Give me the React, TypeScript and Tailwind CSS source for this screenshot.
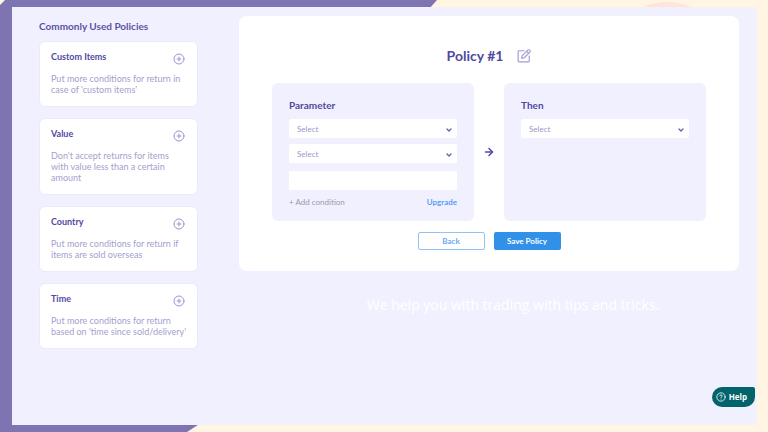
import { useState } from "react";
import { ArrowRight, ChevronDown, CircleHelp, CirclePlus } from "lucide-react";

interface Template {
	title: string;
	description: string;
}

const TEMPLATES: Template[] = [
	{
		title: "Custom Items",
		description: "Put more conditions for return in case of 'custom items'",
	},
	{
		title: "Value",
		description: "Don't accept returns for items with value less than a certain amount",
	},
	{
		title: "Country",
		description: "Put more conditions for return if items are sold overseas",
	},
	{
		title: "Time",
		description: "Put more conditions for return based on 'time since sold/delivery'",
	},
];

function Backdrop() {
	return (
		<svg
			className="absolute inset-0 h-full w-full"
			viewBox="0 0 768 432"
			preserveAspectRatio="none"
			aria-hidden="true"
		>
			<circle cx="667" cy="62" r="60" fill="#ffe4db" />
			<path d="M5 0H437L429 9L201 423L187 432H0V5Z" fill="#7e74b1" />
		</svg>
	);
}

function TemplateCard({ title, description }: Template) {
	return (
		<article className="rounded-md border border-[#ebe9fb] bg-white pt-2 pr-[10px] pb-[11px] pl-[11px]">
			<div className="flex items-start justify-between pr-[2px]">
				<h3 className="text-[9px] leading-[14px] font-bold text-[#5149a0]">{title}</h3>
				<button type="button" aria-label={`Add ${title}`} className="mt-[3px] text-[#9d94cd]">
					<CirclePlus className="size-3" strokeWidth={2} />
				</button>
			</div>
			<p className="mt-2 text-[9px] leading-[11px] text-[#a49fcd]">{description}</p>
		</article>
	);
}

function SelectField({ label }: { label: string }) {
	return (
		<div className="relative">
			<select
				aria-label={label}
				className="block h-[19px] w-full appearance-none rounded-xs bg-white px-2 text-[8px] leading-3 text-[#9d98ca]"
			>
				<option>Select</option>
			</select>
			<ChevronDown
				className="pointer-events-none absolute top-[7px] right-1 size-2 text-[#6a62ae]"
				strokeWidth={4}
			/>
		</div>
	);
}

function EditIcon() {
	return (
		<svg
			className="size-[14px]"
			viewBox="0 0 24 24"
			fill="none"
			stroke="currentColor"
			strokeWidth="2"
			strokeLinecap="round"
			strokeLinejoin="round"
		>
			<path d="M12 3H3.5A1.5 1.5 0 0 0 2 4.500V20.500A1.500 1.500 0 0 0 3.500 22H19.500A1.500 1.500 0 0 0 21 20.500V12" />
			<path d="M8 16L9 11.500L18.500 2A2.100 2.100 0 0 1 22 5.500L12.500 15Z" />
			<path d="M16.500 4L20 7.500" />
		</svg>
	);
}

function App() {
	const [value, setValue] = useState("");

	return (
		<div className="relative flex min-h-screen bg-[#fff5e2] pt-[7px] pr-[11px] pb-[7px] pl-3 font-[Lato,sans-serif]">
			<Backdrop />

			<div className="relative flex flex-1 items-start bg-[#f1f0ff] pr-[18px] pl-[27px]">
				<aside className="w-[159px] flex-none pt-3">
					<h2 className="text-[10px] leading-[14px] font-bold text-[#5b52a5]">
						Commonly Used Policies
					</h2>
					<div className="mt-2 flex flex-col gap-[11px]">
						{TEMPLATES.map((template) => (
							<TemplateCard key={template.title} {...template} />
						))}
					</div>
				</aside>

				<main className="ml-[41px] min-w-0 flex-1 pt-[9px]">
					<section className="rounded-lg bg-white px-[33px] pt-[30px] pb-[21px]">
						<div className="flex items-center justify-center gap-[14px]">
							<h1 className="text-[14px] leading-5 font-bold text-[#5149a0]">Policy #1</h1>
							<button type="button" aria-label="Rename policy" className="text-[#a39bd0]">
								<EditIcon />
							</button>
						</div>

						<div className="mt-[17px] flex items-stretch">
							<div className="flex-1 rounded-md bg-[#f1f0ff] px-[17px] pt-[15px] pb-[13px]">
								<h2 className="text-[10px] leading-[14px] font-bold text-[#5149a0]">
									Parameter
								</h2>
								<div className="mt-[7px] flex flex-col gap-[6px]">
									<SelectField label="Parameter" />
									<SelectField label="Operator" />
									<input
										aria-label="Value"
										value={value}
										onChange={(e) => setValue(e.target.value)}
										className="mt-[2px] block h-[19px] w-full bg-white px-2 text-[8px] text-[#5149a0]"
									/>
								</div>
								<div className="mt-[6px] flex justify-between text-[8px] leading-3">
									<button type="button" className="text-[#9b98ad]">
										+ Add condition
									</button>
									<a href="#upgrade" className="font-semibold text-[#4b93fa]">
										Upgrade
									</a>
								</div>
							</div>

							<div className="flex w-[30px] flex-none items-center justify-center text-[#5149a0]">
								<ArrowRight className="size-3" strokeWidth={3} />
							</div>

							<div className="flex-1 rounded-md bg-[#f1f0ff] px-[17px] pt-[15px] pb-[13px]">
								<h2 className="text-[10px] leading-[14px] font-bold text-[#5149a0]">Then</h2>
								<div className="mt-[7px]">
									<SelectField label="Then" />
								</div>
							</div>
						</div>

						<div className="mt-[11px] flex justify-center gap-[9px] text-[8px] leading-3 font-bold">
							<button
								type="button"
								className="h-[18px] w-[67px] rounded-xs border border-[#8fc4f5] text-[#6aa9ec]"
							>
								Back
							</button>
							<button
								type="button"
								className="h-[18px] w-[67px] rounded-xs bg-[#3190e8] text-white"
							>
								Save Policy
							</button>
						</div>
					</section>

					<p className="mt-6 pl-12 text-center font-['Open_Sans',sans-serif] text-[14px] leading-5 text-white">
						We help you with trading with tips and tricks.
					</p>
				</main>

				<button
					type="button"
					className="absolute right-[2px] bottom-[18px] flex h-5 items-center gap-[3px] rounded-[10px] rounded-tr-xs bg-[#03636a] pr-2 pl-1 font-['Open_Sans',sans-serif] text-[8px] leading-3 font-bold text-white"
				>
					<CircleHelp className="size-[10px]" strokeWidth={2} />
					Help
				</button>
			</div>
		</div>
	);
}

export default App;
